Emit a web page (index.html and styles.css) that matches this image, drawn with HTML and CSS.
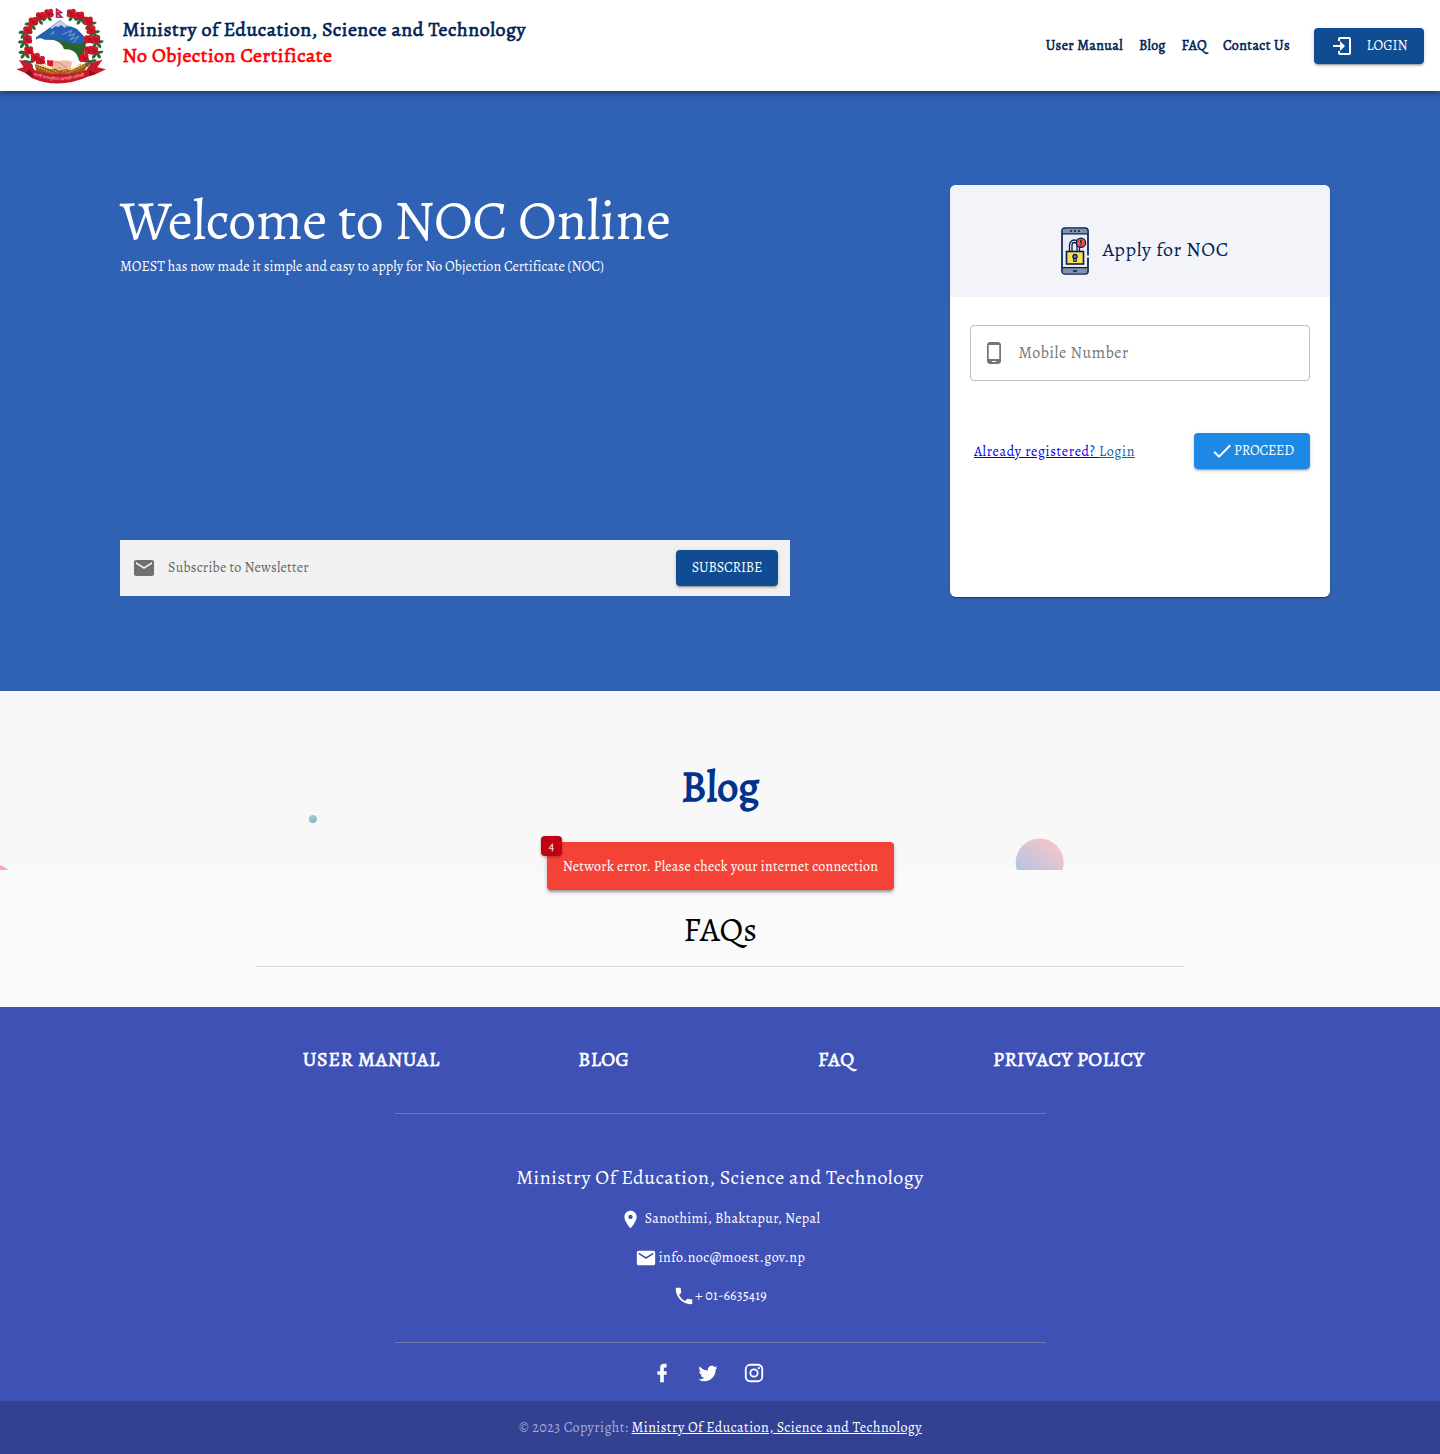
FILE: index.html
```html
<!DOCTYPE html>
<html lang="en">
<head>
<meta charset="utf-8">
<title>No Objection Certificate</title>
<link rel="stylesheet" href="styles.css">
</head>
<body>
<header class="topbar">
  <svg class="emblem" viewBox="48 24 270 228" aria-hidden="true">
    <defs>
      <g id="leaves" fill="#24683a">
        <path d="M-4-5Q-17-9-21 0-15 6-7 3-17 10-13 18-3 17-1 6 3 18 12 17 15 8 6 3 18 4 20-5 10-8 2-3Z"/>
      </g>
      <g id="flower">
        <circle r="11" fill="#c01525"/>
        <circle cx="-6" cy="-5" r="7.500" fill="#c91728"/>
        <circle cx="6" cy="-6" r="7.500" fill="#d41a2c"/>
        <circle cx="7" cy="4" r="7.500" fill="#c01525"/>
        <circle cx="-6" cy="5" r="7.500" fill="#d01829"/>
        <path d="M-5-5L-1 1 5-4M0 1V7" stroke="#8e0e1e" stroke-width="2" fill="none"/>
      </g>
    </defs>
    <g>
      <use href="#leaves" x="142" y="46"/><use href="#leaves" x="116" y="57"/><use href="#leaves" x="94" y="73"/><use href="#leaves" x="76" y="98"/><use href="#leaves" x="74" y="127"/><use href="#leaves" x="76" y="158"/><use href="#leaves" x="86" y="186"/>
      <use href="#leaves" x="220" y="46"/><use href="#leaves" x="244" y="56"/><use href="#leaves" x="270" y="71"/><use href="#leaves" x="280" y="97"/><use href="#leaves" x="291" y="127"/><use href="#leaves" x="290" y="158"/><use href="#leaves" x="270" y="184"/>
    </g>
    <path d="M108 112L145 86 163 73 180 61 199 74 230 86 261 118 249 141 215 137 161 120 108 121Z" fill="#2460b3"/>
    <path d="M150 84L180 62 212 80 198 79 194 84 184 75 174 81 168 78 155 86Z" fill="#c5d5e9"/>
    <path d="M187 104L215 91 207 108 225 101 211 119 237 109 217 131M149 105L162 94 159 104" fill="none" stroke="#7d9fcb" stroke-width="3"/>
    <path d="M155 122Q174 118 190 123T242 133L259 124 248 182 205 185 150 150Z" fill="#2b632d"/>
    <path d="M106 120Q118 110 133 119L161 120Q187 127 192 148 217 146 230 163L238 182 180 189 150 182 118 163Q103 143 106 120Z" fill="#fff"/>
    <path d="M104 192L150 208 181 202 214 210 264 186 250 225 180 240 112 224Z" fill="#9c5b19"/>
    <path d="M109 199L163 222M120 193L174 217M134 191L177 210M255 196L195 223M243 192L188 216M226 191L181 210" stroke="#e0a032" stroke-width="4" stroke-dasharray="5 3"/>
    <path d="M154 181L180 182 202 181 218 188 211 204 190 209 177 212 158 199Z" fill="#f1b9a4"/>
    <path d="M164 188Q177 184 186 193L203 204M174 202L184 206" fill="none" stroke="#d98979" stroke-width="3"/>
    <path d="M141 180L160 182 158 200 142 196Z" fill="#d71525"/>
    <path d="M216 185L236 182 232 200 213 204Z" fill="#fff"/>
    <g>
      <use href="#flower" x="146" y="40"/><use href="#flower" x="121" y="49"/><use href="#flower" x="99" y="65"/><use href="#flower" x="83" y="91"/><use href="#flower" x="82" y="119"/><use href="#flower" x="86" y="152"/><use href="#flower" x="106" y="172"/><use href="#flower" x="121" y="181"/>
      <use href="#flower" x="214" y="40"/><use href="#flower" x="239" y="48"/><use href="#flower" x="265" y="63"/><use href="#flower" x="273" y="90"/><use href="#flower" x="287" y="118"/><use href="#flower" x="266" y="118"/><use href="#flower" x="266" y="151"/><use href="#flower" x="281" y="152"/><use href="#flower" x="252" y="174"/>
    </g>
    <path d="M168 25L189 38 178 41 190 53H168Z" fill="#d3193c" stroke="#355699" stroke-width="1.5"/>
    <path d="M173 35h3M173 48h4" stroke="#fff" stroke-width="3"/>
    <path d="M49 208L71 202 57 180Q74 181 91 190L103 210Q178 236 259 210L272 190Q285 184 307 179L292 202 318 208 288 222 267 229Q179 269 96 235L76 219Z" fill="#c9182b"/>
    <path d="M76 219L91 208 101 233M267 229L268 209 288 222" fill="#870f20"/>
    <path id="motto" d="M100 225Q180 257 264 223" fill="none"/>
    <text class="motto"><textPath href="#motto">जननी जन्मभूमिश्च स्वर्गादपि गरीयसी</textPath></text>
  </svg>
  <div class="brand">
    <div class="brand-name">Ministry of Education, Science and Technology</div>
    <div class="brand-sub">No Objection Certificate</div>
  </div>
  <nav class="nav">
    <a class="n-manual">User Manual</a><a class="n-blog">Blog</a><a class="n-faq">FAQ</a><a class="n-contact">Contact Us</a>
  </nav>
  <button class="btn login"><svg viewBox="0 0 24 24"><path d="M10 3h9a2 2 0 0 1 2 2v14a2 2 0 0 1-2 2H10a2 2 0 0 1-2-2v-2h2v2h9V5h-9v2H8V5a2 2 0 0 1 2-2z"/><path d="M3 11h7V7l5 5-5 5v-4H3z"/></svg><span>LOGIN</span></button>
</header>

<main>
  <section class="hero">
    <div class="intro">
      <h1>Welcome to NOC Online</h1>
      <p>MOEST has now made it simple and easy to apply for No Objection Certificate (NOC)</p>
      <form class="subscribe">
        <svg viewBox="0 0 24 24"><path d="M20 4H4c-1.100 0-2 .9-2 2v12c0 1.100.9 2 2 2h16c1.100 0 2-.9 2-2V6c0-1.100-.9-2-2-2zm0 4l-8 5-8-5V6l8 5 8-5v2z"/></svg>
        <label>Subscribe to Newsletter</label>
        <button type="button" class="btn"><span>SUBSCRIBE</span></button>
      </form>
    </div>
    <div class="card">
      <div class="card-head">
        <svg class="phone" viewBox="0 0 28 48"><rect x="1" y="1" width="26" height="46" rx="3" fill="#e9edf3" stroke="#03204f" stroke-width="1.700"/><path d="M1.800 2h24.400v4.500H1.800zM1.800 41h24.400v5.200H1.800z" fill="#8490a8"/><path d="M1 6.800h26M1 40.700h26M12 44h4" stroke="#03204f" stroke-width="1.300"/><path d="M9 4h10" stroke="#03204f" stroke-width="1.500" stroke-dasharray="2 2"/><path d="M8.500 25v-7a5 5 0 0 1 10 0v7M11 25v-7a2.500 2.500 0 0 1 5 0v7" fill="none" stroke="#03204f" stroke-width="1.300"/><rect x="5.500" y="24.500" width="17" height="12.500" fill="#f8df4e" stroke="#03204f" stroke-width="1.600"/><circle cx="14" cy="29.500" r="2" fill="#8490a8" stroke="#03204f" stroke-width="1.500"/><path d="M12.700 31.500h2.600v3h-2.600z" fill="#8490a8" stroke="#03204f"/><circle cx="20" cy="15.800" r="4.600" fill="#f4524d" stroke="#03204f" stroke-width="1.300"/><path d="M20 12.800v3.700M20 17.400v1.400" stroke="#03204f" stroke-width="1.400"/><path d="M26 28.500h2v2h-2z" fill="#f3f5f9"/></svg>
        <h2>Apply for NOC</h2>
      </div>
      <div class="card-body">
        <div class="field">
          <svg viewBox="0 0 24 24"><path d="M16 1H8C6.340 1 5 2.340 5 4v16c0 1.660 1.340 3 3 3h8c1.660 0 3-1.340 3-3V4c0-1.660-1.340-3-3-3zm-2 20h-4v-1h4v1zm3.250-3H6.750V4h10.500v14z"/></svg>
          <label>Mobile Number</label>
        </div>
        <div class="actions">
          <a class="registered">Already registered? <span>Login</span></a>
          <button class="btn proceed"><svg viewBox="0 0 24 24"><path d="M9 16.170L4.830 12l-1.420 1.410L9 19 21 7l-1.410-1.410z"/></svg><span>PROCEED</span></button>
        </div>
      </div>
    </div>
  </section>

  <section class="blog">
    <svg class="bubbles" viewBox="0 0 1440 179" aria-hidden="true">
      <defs>
        <linearGradient id="pink" x1=".75" y1="0" x2=".2" y2=".8"><stop stop-color="#fac4ca"/><stop offset="1" stop-color="#b0c5e1"/></linearGradient>
        <linearGradient id="mint" x1=".2" y1="0" x2=".8" y2="1"><stop stop-color="#91ddc7"/><stop offset="1" stop-color="#89a9d2"/></linearGradient>
      </defs>
      <circle cx="1039.700" cy="171.500" r="24" fill="url(#pink)"/>
      <circle cx="312.800" cy="128" r="4" fill="url(#mint)"/>
      <path d="M0 174Q5 176 8.500 179H0Z" fill="#fba4af"/>
    </svg>
    <h2>Blog</h2>
  </section>

  <section class="faqs">
    <h2>FAQs</h2>
    <hr>
  </section>
</main>

<footer>
  <div class="links"><a class="f-manual">USER MANUAL</a><a class="f-blog">BLOG</a><a class="f-faq">FAQ</a><a class="f-policy">PRIVACY POLICY</a></div>
  <div class="contact">
    <h3>Ministry Of Education, Science and Technology</h3>
    <div class="line place"><svg viewBox="0 0 24 24"><path d="M12 2C8.130 2 5 5.130 5 9c0 5.250 7 13 7 13s7-7.750 7-13c0-3.870-3.130-7-7-7zm0 9.500a2.500 2.500 0 1 1 0-5 2.500 2.500 0 0 1 0 5z"/></svg><span>Sanothimi, Bhaktapur, Nepal</span></div>
    <div class="line mail"><svg viewBox="0 0 24 24"><path d="M20 4H4c-1.100 0-2 .9-2 2v12c0 1.100.9 2 2 2h16c1.100 0 2-.9 2-2V6c0-1.100-.9-2-2-2zm0 4l-8 5-8-5V6l8 5 8-5v2z"/></svg><span>info.noc@moest.gov.np</span></div>
    <div class="line tel"><svg viewBox="0 0 24 24"><path d="M6.620 10.790c1.440 2.830 3.760 5.140 6.590 6.590l2.200-2.200c.27-.27.67-.36 1.020-.24 1.120.37 2.330.57 3.570.57.55 0 1 .45 1 1V20c0 .55-.45 1-1 1-9.390 0-17-7.610-17-17 0-.55.45-1 1-1h3.500c.55 0 1 .45 1 1 0 1.250.2 2.450.57 3.570.11.35.03.74-.25 1.020l-2.200 2.200z"/></svg><span>+ 01-6635419</span></div>
  </div>
  <div class="social">
    <svg viewBox="0 0 24 24"><path d="M17 2v4h-2c-.69 0-1 .81-1 1.500V10h3v4h-3v8h-4v-8H7v-4h3V6a4 4 0 0 1 4-4h3z"/></svg>
    <svg viewBox="0 0 24 24"><path d="M22.460 6c-.77.350-1.600.580-2.460.690.880-.530 1.560-1.370 1.880-2.380-.830.500-1.750.850-2.720 1.050C18.370 4.500 17.260 4 16 4c-2.350 0-4.270 1.920-4.270 4.290 0 .340.040.670.110.980C8.280 9.090 5.110 7.380 3 4.790c-.370.630-.580 1.370-.580 2.150 0 1.490.750 2.810 1.910 3.560-.710 0-1.370-.2-1.950-.5v.030c0 2.080 1.480 3.820 3.440 4.210a4.220 4.220 0 0 1-1.930.070 4.280 4.280 0 0 0 4 2.980 8.521 8.521 0 0 1-5.330 1.840c-.340 0-.680-.020-1.020-.060C3.440 20.290 5.700 21 8.120 21 16 21 20.330 14.460 20.330 8.790c0-.190 0-.370-.010-.560.840-.6 1.560-1.360 2.140-2.230z"/></svg>
    <svg viewBox="0 0 24 24"><path d="M7.800 2h8.400C19.400 2 22 4.600 22 7.800v8.400a5.800 5.800 0 0 1-5.800 5.800H7.800C4.600 22 2 19.400 2 16.200V7.800A5.800 5.800 0 0 1 7.800 2m-.2 2A3.600 3.600 0 0 0 4 7.600v8.800C4 18.390 5.610 20 7.600 20h8.800a3.600 3.600 0 0 0 3.600-3.600V7.600C20 5.610 18.390 4 16.400 4H7.600m9.650 1.500a1.250 1.250 0 1 1 0 2.500 1.250 1.250 0 0 1 0-2.500M12 7a5 5 0 1 1 0 10 5 5 0 0 1 0-10m0 2a3 3 0 1 0 0 6 3 3 0 0 0 0-6z"/></svg>
  </div>
  <div class="copyright"><span class="year">© 2023 Copyright:</span><a>Ministry Of Education, Science and Technology</a></div>
</footer>

<div class="toast" role="alert"><span class="count">4</span><span class="message">Network error. Please check your internet connection</span></div>
</body>
</html>
```
FILE: styles.css
```css
* { box-sizing: border-box; }
body { margin: 0; background: #fafafa; font-family: Alegreya, "Liberation Serif", serif; font-size: 14px; color: #000; }
h1, h2, h3, p { margin: 0; font-weight: 400; }
svg { display: block; fill: currentColor; flex: none; }
span, a, label { white-space: nowrap; }

.topbar { position: relative; z-index: 1; height: 91px; display: flex; align-items: center; padding: 0 16px; background: #fff; box-shadow: 0 2px 4px -1px rgba(0,0,0,.2), 0 4px 5px rgba(0,0,0,.14), 0 1px 10px rgba(0,0,0,.12); }
.emblem { width: 90px; height: 76px; margin-right: 16.500px; }
.motto { fill: #f3c7c9; font: 12px "Noto Sans", sans-serif; }
.brand { flex: 1; font-size: 20px; line-height: 26px; padding-bottom: 6px; letter-spacing: .5px; white-space: nowrap; -webkit-text-stroke: .7px currentColor; }
.brand-name { color: #001f54; }
.brand-sub { color: #f00; }
.nav { display: flex; gap: 16px; margin-right: 24px; color: #001f54; line-height: 20px; -webkit-text-stroke: .55px currentColor; }
.n-manual { letter-spacing: .4px; }
.n-blog { letter-spacing: .15px; }
.n-faq { letter-spacing: .25px; }
.n-contact { letter-spacing: .43px; }
.btn { display: flex; align-items: center; justify-content: center; height: 36px; padding: 0; border: 0; border-radius: 4px; background: #0f4c91; color: #fff; font: 14px Alegreya, "Liberation Serif", serif; box-shadow: 0 3px 1px -2px rgba(0,0,0,.2), 0 2px 2px rgba(0,0,0,.14), 0 1px 5px rgba(0,0,0,.12); }
.btn svg { width: 24px; height: 24px; }
.login { width: 110px; }
.login svg { margin-right: 12px; }

.hero { height: 600px; display: flex; justify-content: space-between; align-items: flex-start; padding: 94px 110px 0 120px; background: #2f61b5; }
.intro { width: 670px; height: 411px; display: flex; flex-direction: column; color: #fff; }
h1 { font-size: 56px; line-height: 70px; padding-bottom: 2px; letter-spacing: -.33px; white-space: nowrap; }
.intro p { line-height: 20px; letter-spacing: .035px; white-space: nowrap; }
.subscribe { margin-top: auto; height: 56px; display: flex; align-items: center; padding: 0 12px; background: #f1f1f1; color: #666; }
.subscribe svg { width: 24px; height: 24px; margin-right: 12px; color: #707070; }
.subscribe label { flex: 1; padding-bottom: 2px; letter-spacing: .23px; }
.subscribe .btn { width: 102px; padding-bottom: 2px; letter-spacing: -.15px; }
.card { width: 380px; height: 412px; border-radius: 6px; overflow: hidden; background: #fff; box-shadow: 0 2px 1px -1px rgba(0,0,0,.2), 0 1px 1px rgba(0,0,0,.14), 0 1px 3px rgba(0,0,0,.12); }
.card-head { height: 112px; display: flex; align-items: center; padding: 20px 0 0 111px; background: #f3f4f9; color: #001f54; }
.phone { width: 28px; height: 48px; margin-right: 13.500px; }
.card-head h2 { font-size: 20px; line-height: 24px; padding-bottom: 2px; letter-spacing: .58px; white-space: nowrap; }
.card-body { padding: 28px 20px; }
.field { height: 56px; display: flex; align-items: center; padding-left: 11px; border: 1px solid #bdbdbd; border-radius: 4px; color: #757575; font-size: 16px; letter-spacing: .56px; }
.field svg { width: 24px; height: 24px; margin-right: 12.500px; }
.actions { display: flex; align-items: center; justify-content: space-between; margin-top: 52px; padding-left: 4px; }
.registered { color: #00e; text-decoration: underline; letter-spacing: .67px; }
.registered span { color: #0f62a8; text-decoration: underline; }
.proceed { width: 116px; background: #1e88e5; letter-spacing: -.17px; }
.proceed span { padding-bottom: 2px; }

.blog { position: relative; height: 179px; background: #f8f8f8; text-align: center; padding-top: 70px; }
.bubbles { position: absolute; inset: 0; width: 1440px; height: 179px; }
.blog h2 { position: relative; font-size: 42px; line-height: 52px; padding-left: 1px; letter-spacing: .25px; color: #01338d; -webkit-text-stroke: 1.500px currentColor; }
.faqs { height: 137px; padding: 38px 255px 0; text-align: center; }
.faqs h2 { font-size: 34px; line-height: 44px; }
hr { height: 1px; margin: 14px 0 0; border: 0; background: #dbdbdb; }

footer { background: #3f51b5; color: #fff; }
.links { width: 651px; height: 107px; margin: 0 auto; display: grid; grid-template-columns: repeat(4, 232.500px); justify-content: center; justify-items: center; align-items: start; padding-top: 40px; border-bottom: 1px solid #7179b5; font-size: 20px; line-height: 26px; letter-spacing: .42px; -webkit-text-stroke: .7px currentColor; }
.f-manual { letter-spacing: .58px; }
.contact { width: 651px; height: 229px; margin: 0 auto; padding-top: 50px; display: flex; flex-direction: column; align-items: center; border-bottom: 1px solid #7179b5; }
.contact h3 { font-size: 20px; line-height: 28px; letter-spacing: .5px; white-space: nowrap; }
.line { display: flex; align-items: center; height: 22px; }
.line span { padding-bottom: 2px; }
.line svg { width: 22px; height: 22px; margin-right: 2px; }
.place { margin-top: 16px; letter-spacing: .34px; }
.place svg { width: 21px; height: 21px; margin-right: 4px; }
.mail { margin-top: 17px; letter-spacing: .48px; }
.tel { margin-top: 16px; letter-spacing: .16px; }
.tel svg { margin-right: 0; }
.social { height: 58px; display: flex; align-items: center; justify-content: center; gap: 24px; padding: 1px 25px 0 0; }
.social svg { width: 22px; height: 22px; }
.copyright { height: 53px; display: flex; justify-content: center; align-items: center; gap: 3px; padding-left: 1px; background: #334192; letter-spacing: .47px; }
.year { color: #a6add6; letter-spacing: .42px; }
.copyright a { text-decoration: underline; }

.toast { position: absolute; z-index: 2; left: 547px; top: 842px; width: 347px; height: 48px; display: flex; align-items: center; justify-content: center; border-radius: 4px; background: #f44336; color: #fff; letter-spacing: .25px; box-shadow: 0 3px 2px -1px rgba(0,0,0,.2), 0 2px 4px rgba(0,0,0,.25); }
.count { position: absolute; left: -6px; top: -6px; width: 21px; height: 20px; border-radius: 4px; background: #c10015; font-size: 13px; line-height: 20px; text-align: center; box-shadow: 0 1px 3px rgba(0,0,0,.35); }
```
